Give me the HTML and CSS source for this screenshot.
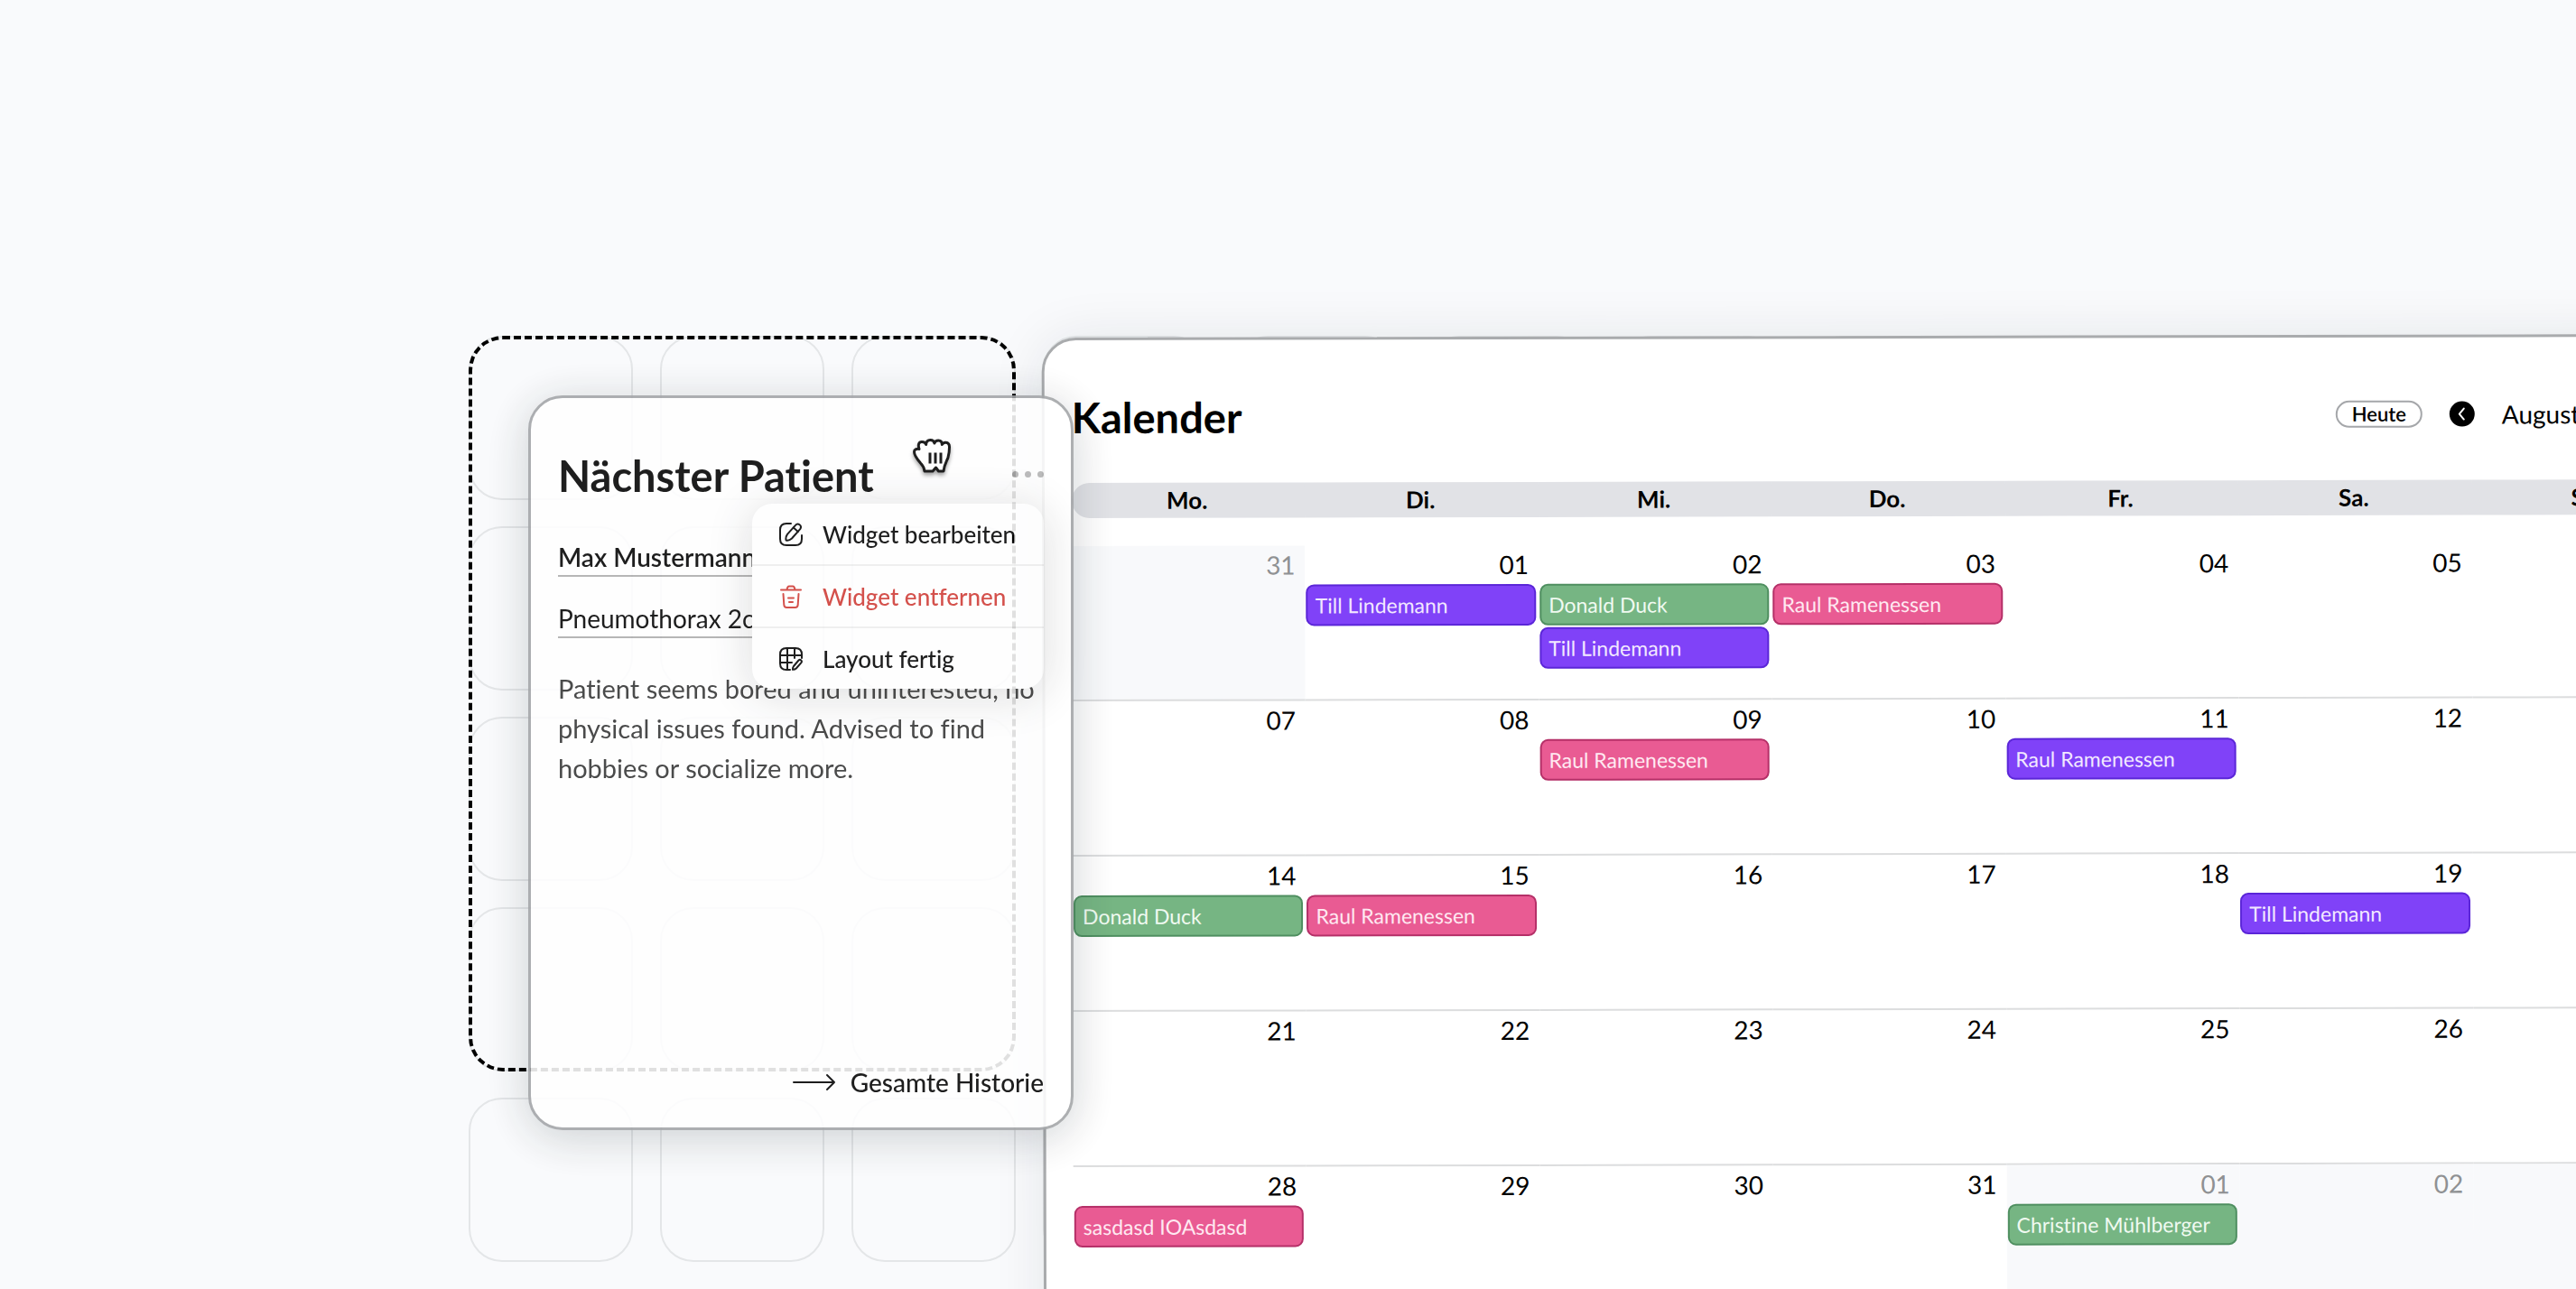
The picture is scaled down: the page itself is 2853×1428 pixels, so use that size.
FILE: index.html
```html
<!DOCTYPE html>
<html lang="de">
<head>
<meta charset="utf-8">
<meta name="viewport" content="width=device-width, initial-scale=1">
<title>Dashboard</title>
<link rel="stylesheet" href="styles.css">
</head>
<body>
<main class="dashboard">
  <svg class="cells" aria-hidden="true">
    <defs>
      <pattern id="cell" width="212" height="211" patternUnits="userSpaceOnUse">
        <rect x="1" y="1" width="180" height="180" rx="36" fill="none" stroke="#e4e6e8" stroke-width="2"/>
      </pattern>
    </defs>
    <rect width="100%" height="100%" fill="url(#cell)"/>
  </svg>

  <section class="calendar">
    <header class="calendar-head">
      <h2 class="title">Kalender</h2>
      <div class="calendar-nav">
        <button class="today" type="button">Heute</button>
        <button class="step" type="button" aria-label="Vorheriger Monat"><svg viewBox="0 0 28 28"><path d="M16 8l-5 6 5 6"/></svg></button>
        <span class="month">August 2023</span>
        <button class="step" type="button" aria-label="Nächster Monat"><svg viewBox="0 0 28 28"><path d="M12 8l5 6-5 6"/></svg></button>
      </div>
    </header>
    <table class="month-table">
      <thead>
        <tr><th scope="col">Mo.</th><th scope="col">Di.</th><th scope="col">Mi.</th><th scope="col">Do.</th><th scope="col">Fr.</th><th scope="col">Sa.</th><th scope="col">So.</th></tr>
      </thead>
      <tbody>
        <tr>
          <td class="outside"><span class="day">31</span></td>
          <td><span class="day">01</span><a class="event purple" href="#">Till Lindemann</a></td>
          <td><span class="day">02</span><a class="event green" href="#">Donald Duck</a><a class="event purple" href="#">Till Lindemann</a></td>
          <td><span class="day">03</span><a class="event pink" href="#">Raul Ramenessen</a></td>
          <td><span class="day">04</span></td>
          <td><span class="day">05</span></td>
          <td><span class="day">06</span></td>
        </tr>
        <tr>
          <td><span class="day">07</span></td>
          <td><span class="day">08</span></td>
          <td><span class="day">09</span><a class="event pink" href="#">Raul Ramenessen</a></td>
          <td><span class="day">10</span></td>
          <td><span class="day">11</span><a class="event purple" href="#">Raul Ramenessen</a></td>
          <td><span class="day">12</span></td>
          <td><span class="day">13</span></td>
        </tr>
        <tr>
          <td><span class="day">14</span><a class="event green" href="#">Donald Duck</a></td>
          <td><span class="day">15</span><a class="event pink" href="#">Raul Ramenessen</a></td>
          <td><span class="day">16</span></td>
          <td><span class="day">17</span></td>
          <td><span class="day">18</span></td>
          <td><span class="day">19</span><a class="event purple" href="#">Till Lindemann</a></td>
          <td><span class="day">20</span></td>
        </tr>
        <tr>
          <td><span class="day">21</span></td>
          <td><span class="day">22</span></td>
          <td><span class="day">23</span></td>
          <td><span class="day">24</span></td>
          <td><span class="day">25</span></td>
          <td><span class="day">26</span></td>
          <td><span class="day">27</span></td>
        </tr>
        <tr>
          <td><span class="day">28</span><a class="event pink" href="#">sasdasd IOAsdasd</a></td>
          <td><span class="day">29</span></td>
          <td><span class="day">30</span></td>
          <td><span class="day">31</span></td>
          <td class="outside"><span class="day">01</span><a class="event green" href="#">Christine Mühlberger</a></td>
          <td class="outside"><span class="day">02</span></td>
          <td class="outside"><span class="day">03</span></td>
        </tr>
      </tbody>
    </table>
  </section>

  <div class="slot">
    <article class="card">
      <header class="card-head">
        <h2 class="title">Nächster Patient</h2>
        <button class="more" type="button" aria-label="Optionen"><i></i><i></i><i></i></button>
      </header>
      <a class="field patient" href="#">Max Mustermann</a>
      <a class="field" href="#">Pneumothorax 2cm</a>
      <p class="note">Patient seems bored and uninterested, no physical issues found. Advised to find hobbies or socialize more.</p>
      <a class="history" href="#">
        <svg class="arrow" viewBox="0 0 48 20" aria-hidden="true"><path d="M1 10h45M38 2l8 8-8 8"/></svg>
        Gesamte Historie
      </a>

      <ul class="menu">
        <li><button type="button">
          <svg viewBox="0 0 26 26" aria-hidden="true"><path d="M13 1H8Q1 1 1 8v10q0 7 7 7h10q7 0 7-7v-4"/><path d="M18 2.800q2-2.400 4.500-.6t.9 4.600L14 17.500q-3 2.800-6.400 2-.8-3.400 1.400-6.600z"/><path d="M15.800 5.600l5 4.400"/></svg>
          Widget bearbeiten</button></li>
        <li><button class="danger" type="button">
          <svg viewBox="0 0 26 26" aria-hidden="true"><path d="M2 5.500h22M8.500 5.500Q9 1.500 11 1.500h4q2 0 2.500 4M4.500 10l.8 12q.2 3 3 3h9.400q2.800 0 3-3l.8-12M10 14.500h6M11 19h4"/></svg>
          Widget entfernen</button></li>
        <li><button type="button">
          <svg viewBox="0 0 26 26" aria-hidden="true"><path d="M12 25H8q-7 0-7-7V8q0-7 7-7h10q7 0 7 7v4M1 9h24M1 17h13M9 1v24M17 1v11"/><path d="M21.500 14.500q1.400-1.200 2.700 0t.2 2.700l-5.600 6.300q-1.700 1.500-3.800 1.300-.2-2.200 1-3.800z"/></svg>
          Layout fertig</button></li>
      </ul>

      <svg class="hand" viewBox="0 0 42 40" aria-hidden="true">
        <path d="M13 36C12.500 32 11 29.500 8.500 27 5 23 1.500 18.500 1.500 14.500 1.500 12 4 11 7 11.500 5.500 7 6.500 3.500 10 3.500c2.200 0 4 1 4.700 3C14.500 3.500 16.500 1.500 19.300 1.500s4.200 1.200 4.600 3.500C24.500 3 26 2 28.300 2c2.700 0 4 1.600 4 4.500 1-1.800 2.500-2.500 4.300-2.300 2.800.3 3.900 2 3.900 5 0 4-.5 8-1.500 11.500C37.500 25 34.500 29 34 36h-5.500l-3-4-3.500 4z"/>
        <path class="lines" d="M19 15.500v12M25 15.500v12M31 15.500v12"/>
      </svg>
    </article>
  </div>
</main>
</body>
</html>
```
FILE: styles.css
```css
* {
  box-sizing: border-box;
}

body {
  margin: 0;
  min-height: 100vh;
  overflow: hidden;
  background: #f9fafc;
  color: #000;
  font-family: Lato, "Liberation Sans", sans-serif;
  font-size: 28px;
  font-weight: 500;
  font-variant-ligatures: none;
}

a {
  color: inherit;
  text-decoration: none;
}

button {
  margin: 0;
  padding: 0;
  border: 0;
  background: none;
  color: inherit;
  font: inherit;
  font-variant-ligatures: none;
  cursor: pointer;
}

/* Widget grid */
.dashboard {
  display: grid;
  grid-template-columns: repeat(12, 182px);
  grid-auto-rows: 182px;
  gap: 29px 30px;
  height: 100vh;
  padding: 372px 0 0 519px;
  overflow: hidden;
}

.cells {
  grid-area: 1 / 1 / span 5 / span 12;
  width: 100%;
  height: 100%;
}

.title {
  margin: 0;
  font-size: 47px;
  font-weight: 700;
  line-height: 56px;
}

/* Calendar widget, tilted while the layout is being edited */
.calendar {
  grid-area: 1 / 4 / span 6 / span 9;
  padding: 30px;
  border: 3px solid #a9abad;
  border-radius: 38px;
  background: #fff;
  box-shadow: 0 0 60px rgba(20, 30, 40, .09);
  transform: rotate(-.13deg);
}

.calendar-head {
  display: flex;
  align-items: center;
  justify-content: space-between;
  height: 110px;
  margin-bottom: 18px;
}

.calendar-nav {
  display: flex;
  align-items: center;
  gap: 30px;
}

.today {
  width: 96px;
  height: 30px;
  border: 2px solid #a5a7aa;
  border-radius: 15px;
  font-size: 22px;
  font-weight: 600;
  line-height: 26px;
}

.step {
  display: flex;
  width: 28px;
  height: 28px;
  border-radius: 50%;
  background: #000;
}

.step svg {
  fill: none;
  stroke: #fff;
  stroke-width: 2;
  stroke-linecap: round;
  stroke-linejoin: round;
}

.month {
  width: 170px;
  font-weight: 400;
}

.month-table {
  width: calc(100% - 3px);
  table-layout: fixed;
  border-spacing: 0;
}

.month-table th {
  height: 39px;
  padding: 0 3px 0 0;
  background: #e1e2e6;
  font-size: 26px;
  font-weight: 700;
  line-height: 39px;
}

.month-table th:first-child {
  border-radius: 20px 0 0 20px;
}

.month-table th:last-child {
  border-radius: 0 20px 20px 0;
}

.month-table tbody::before {
  content: "";
  display: block;
  height: 31px;
}

.month-table td {
  height: 172px;
  padding: 0 3px 0 1px;
  border-bottom: 2px solid #dcddde;
  vertical-align: top;
}

.month-table .outside {
  background: #f8f9fb;
}

.outside .day {
  color: #8f9193;
}

.day {
  display: block;
  padding-right: 8px;
  font-weight: 400;
  line-height: 43px;
  text-align: right;
}

.event {
  display: block;
  height: 46px;
  margin-bottom: 2px;
  padding: 0 8px;
  border: 2px solid;
  border-radius: 9px;
  font-size: 23px;
  font-weight: 400;
  line-height: 42px;
}

.event.purple {
  border-color: #5b26d8;
  background: #8042f8;
  color: #f2e8ff;
}

.event.green {
  border-color: #4f8f60;
  background: #76b583;
  color: #f0faf1;
}

.event.pink {
  border-color: #b53068;
  background: #e95b93;
  color: #ffe9f1;
}

/* Drop target and the widget dragged out of it */
.slot {
  position: relative;
  z-index: 1;
  grid-area: 1 / 1 / span 4 / span 3;
  border: 4px dashed #000;
  border-radius: 38px;
}

.card {
  position: absolute;
  top: 62px;
  left: 62px;
  display: flex;
  flex-direction: column;
  width: calc(100% + 6px);
  height: calc(100% + 7px);
  padding: 30px;
  border: 3px solid #a2a4a7;
  border-radius: 38px;
  background: #fff;
  box-shadow: 0 8px 50px rgba(20, 30, 40, .22);
  opacity: .88;
}

.card-head {
  display: flex;
  align-items: center;
  justify-content: space-between;
  height: 56px;
  margin: 28px 0 42px;
}

.more {
  display: flex;
  gap: 7px;
  padding: 10px 0 14px;
}

.more i {
  width: 7px;
  height: 7px;
  border-radius: 50%;
  background: #b4b4b4;
}

.field {
  margin-bottom: 26px;
  border-bottom: 2px solid #adadad;
  line-height: 40px;
  font-weight: 400;
}

.field.patient {
  font-weight: 600;
}

.note {
  margin: 8px 0 0;
  color: #333;
  font-size: 29px;
  font-weight: 400;
  line-height: 44px;
}

.history {
  display: flex;
  align-items: center;
  gap: 16px;
  margin: auto 0 0 auto;
  line-height: 40px;
}

.arrow {
  width: 48px;
  height: 20px;
  fill: none;
  stroke: #000;
  stroke-width: 2;
  stroke-linecap: round;
  stroke-linejoin: round;
}

/* Widget options menu */
.menu {
  position: absolute;
  top: 117px;
  right: 30px;
  width: 323px;
  margin: 0;
  padding: 0;
  border-radius: 22px;
  background: #fff;
  box-shadow: 0 6px 50px rgba(20, 20, 20, .16);
  list-style: none;
}

.menu li + li {
  border-top: 2px solid #eee;
}

.menu button {
  display: flex;
  align-items: center;
  gap: 22px;
  width: 100%;
  height: 67px;
  padding-left: 30px;
  font-size: 26px;
}

.menu .danger {
  color: #d03a34;
}

.menu svg {
  width: 26px;
  height: 26px;
  fill: none;
  stroke: currentColor;
  stroke-width: 2;
  stroke-linecap: round;
  stroke-linejoin: round;
}

/* Grab cursor */
.hand {
  position: absolute;
  top: 45px;
  left: 423px;
  width: 42px;
  height: 40px;
  fill: #fff;
  stroke: #000;
  stroke-width: 3;
  stroke-linejoin: round;
  filter: drop-shadow(0 3px 2px rgba(0, 0, 0, .4));
}
```
